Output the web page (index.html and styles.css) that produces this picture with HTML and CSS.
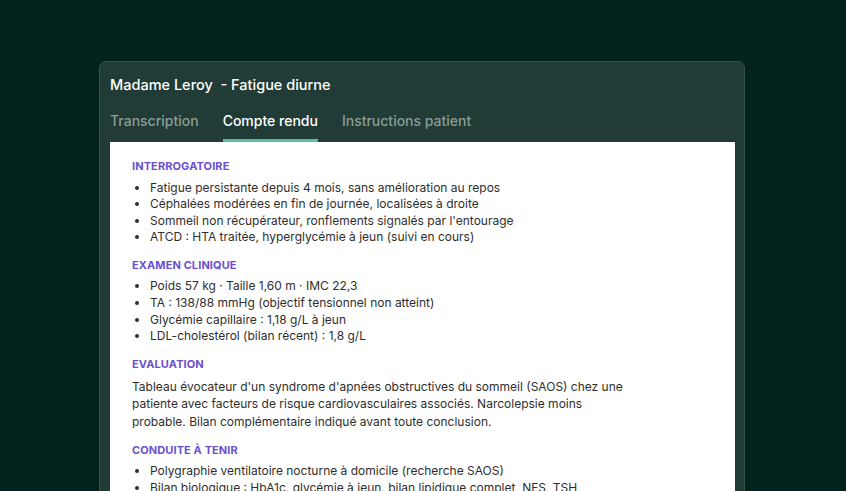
FILE: index.html
```html
<!DOCTYPE html>
<html lang="fr">
<head>
    <meta charset="UTF-8">
    <title>Compte rendu</title>
    <link rel="stylesheet" href="styles.css">
</head>
<body>
    <div class="outer">
        <div class="card">
            <div class="card-title">Madame Leroy &nbsp;- Fatigue diurne</div>
            <div class="tabs">
                <span>Transcription</span>
                <span class="active">Compte rendu</span>
                <span>Instructions patient</span>
            </div>
            <div class="report">
                <h3>Interrogatoire</h3>
                <ul>
                    <li>Fatigue persistante depuis 4 mois, sans amélioration au repos</li>
                    <li>Céphalées modérées en fin de journée, localisées à droite</li>
                    <li>Sommeil non récupérateur, ronflements signalés par l'entourage</li>
                    <li>ATCD : HTA traitée, hyperglycémie à jeun (suivi en cours)</li>
                </ul>
                <h3>Examen clinique</h3>
                <ul>
                    <li>Poids 57 kg · Taille 1,60 m · IMC 22,3</li>
                    <li>TA : 138/88 mmHg (objectif tensionnel non atteint)</li>
                    <li>Glycémie capillaire : 1,18 g/L à jeun</li>
                    <li>LDL-cholestérol (bilan récent) : 1,8 g/L</li>
                </ul>
                <h3>Evaluation</h3>
                <p>Tableau évocateur d'un syndrome d'apnées obstructives du sommeil (SAOS) chez une patiente avec facteurs de risque cardiovasculaires associés. Narcolepsie moins probable. Bilan complémentaire indiqué avant toute conclusion.</p>
                <h3>Conduite à tenir</h3>
                <ul>
                    <li>Polygraphie ventilatoire nocturne à domicile (recherche SAOS)</li>
                    <li>Bilan biologique : HbA1c, glycémie à jeun, bilan lipidique complet, NFS, TSH</li>
                </ul>
            </div>
        </div>
    </div>
</body>
</html>
```

FILE: styles.css
```css
*{
    margin: 0;
    padding: 0;
    box-sizing: border-box;
}
html, body{
    height: 100%;
    overflow: hidden;
}
body{
    background-color: #03211d;
    font-family: Inter, "Noto Sans", sans-serif;
}
.outer{
    padding-top: 61px;
    padding-left: 99px;
}
.card{
    width: 646px;
    height: 600px;
    background-color: #213b36;
    border: 1px solid #36504a;
    border-radius: 7px;
    padding: 13px 9px 0 10px;
}
.card-title{
    color: #ffffff;
    font-size: 14.5px;
    font-weight: 500;
    line-height: 20px;
    white-space: pre;
}
.tabs{
    margin-top: 16px;
    display: flex;
    gap: 24px;
}
.tabs span{
    font-size: 14px;
    font-weight: 500;
    line-height: 20px;
    color: #8a9e98;
    padding-bottom: 8px;
    border-bottom: 3px solid transparent;
}
.tabs span.active{
    color: #ffffff;
    border-bottom-color: #5cbea8;
}
.report{
    background-color: #ffffff;
    height: 500px;
    padding: 17px 22px 0 22px;
    color: #2e2e2e;
    font-size: 12px;
}
.report h3{
    font-size: 11px;
    font-weight: 700;
    line-height: 14px;
    color: #6b50d2;
    text-transform: uppercase;
    letter-spacing: 0.1px;
}
.report ul{
    margin-top: 6.5px;
    margin-bottom: 12px;
    padding-left: 18px;
    line-height: 16.6px;
}
.report p{
    margin-top: 7px;
    margin-bottom: 12.5px;
    max-width: 500px;
    line-height: 17.5px;
}
```
